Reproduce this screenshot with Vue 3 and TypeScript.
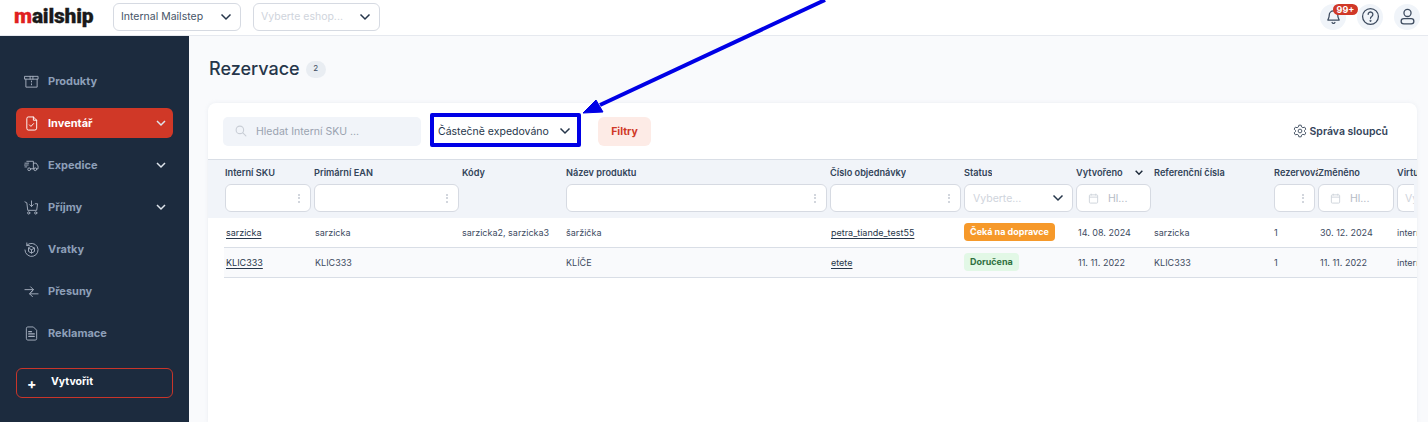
<script setup lang="ts">
const navItems = [
  { label: 'Produkty', icon: 'box', chev: false, active: false },
  { label: 'Inventář', icon: 'inv', chev: true, active: true },
  { label: 'Expedice', icon: 'truck', chev: true, active: false },
  { label: 'Příjmy', icon: 'cart', chev: true, active: false },
  { label: 'Vratky', icon: 'ret', chev: false, active: false },
  { label: 'Přesuny', icon: 'move', chev: false, active: false },
  { label: 'Reklamace', icon: 'doc', chev: false, active: false },
]
const cols = [
  { t: 'Interní SKU', f: 'dots' },
  { t: 'Primární EAN', f: 'dots' },
  { t: 'Kódy', f: '' },
  { t: 'Název produktu', f: 'dots' },
  { t: 'Číslo objednávky', f: 'dots' },
  { t: 'Status', f: 'select' },
  { t: 'Vytvořeno', f: 'date', sort: true },
  { t: 'Referenční čísla', f: '' },
  { t: 'Rezervováno', f: 'dots' },
  { t: 'Změněno', f: 'date' },
  { t: 'Virtuální', f: 'virt' },
]
const rows = [
  { sku: 'sarzicka', ean: 'sarzicka', codes: 'sarzicka2, sarzicka3', name: 'šaržička', order: 'petra_tiande_test55', status: 'Čeká na dopravce', kind: 'wait', created: '14. 08. 2024', ref: 'sarzicka', qty: '1', changed: '30. 12. 2024', virt: 'interní' },
  { sku: 'KLIC333', ean: 'KLIC333', codes: '', name: 'KLÍČE', order: 'etete', status: 'Doručena', kind: 'done', created: '11. 11. 2022', ref: 'KLIC333', qty: '1', changed: '11. 11. 2022', virt: 'interní' },
]
</script>

<template>
  <div class="app">
    <header class="top">
      <div class="logo"><span class="red">m</span>ailship</div>
      <div class="sel sel-a"><span>Internal Mailstep</span><svg class="chev" viewBox="0 0 12 8"><path d="M1.500 1.500 6 6l4.500-4.500" /></svg></div>
      <div class="sel sel-b"><span>Vyberte eshop...</span><svg class="chev" viewBox="0 0 12 8"><path d="M1.500 1.500 6 6l4.500-4.500" /></svg></div>
      <div class="top-right">
        <div class="round bell">
          <svg viewBox="0 0 24 24" width="17" height="17" fill="none" stroke="#3d4b5f" stroke-width="1.800" stroke-linecap="round" stroke-linejoin="round"><path d="M6 10a6 6 0 0 1 12 0c0 5 2 6 2 7H4c0-1 2-2 2-7Z" /><path d="M10 20.500a2.200 2.200 0 0 0 4 0" /></svg>
          <span class="badge">99+</span>
        </div>
        <div class="round help">
          <svg viewBox="0 0 24 24" width="19" height="19" fill="none" stroke="#3d4b5f" stroke-width="1.600" stroke-linecap="round"><circle cx="12" cy="12" r="10" /><path d="M9 9.300a3 3 0 1 1 4.600 2.600c-1 .6-1.600 1.200-1.600 2.400" /><circle cx="12" cy="17.500" r=".5" /></svg>
        </div>
        <div class="round user">
          <svg viewBox="0 0 24 24" width="17" height="17" fill="none" stroke="#3d4b5f" stroke-width="1.800"><circle cx="12" cy="7" r="5" /><rect x="3" y="15" width="18" height="7.500" rx="3.750" /></svg>
        </div>
      </div>
    </header>

    <div class="body">
      <aside class="side">
        <nav class="nav">
          <div v-for="n in navItems" :key="n.label" class="nav-item" :class="{ active: n.active }">
            <svg class="nav-ico" viewBox="0 0 16 16" fill="none" stroke="currentColor" stroke-width="1" stroke-linejoin="round" stroke-linecap="round">
              <template v-if="n.icon === 'box'"><path d="M1 2.500h14v3H1zM2 5.500V14h12V5.500" /><path d="M6.500 2.500v3M9.500 2.500v3M8 7.500v1M8 10.500v1" /></template>
              <template v-else-if="n.icon === 'inv'"><path d="M3 2.500A1.500 1.500 0 0 1 4.500 1H10l3.500 3.500V13a2 2 0 0 1-2 2h-7A1.500 1.500 0 0 1 3 13.500Z" /><path d="M10 1v3.500h3.500M5.800 9.500l1.600 1.600 2.800-3" /></template>
              <template v-else-if="n.icon === 'truck'"><path d="M3 3.500h7v8H7M10 5.500h3l2 3v3h-1.500M10 11.500h1M1 5.500h4M.5 7.500h4M1 9.500h2" /><circle cx="5.500" cy="12" r="1.500" /><circle cx="12" cy="12" r="1.500" /></template>
              <template v-else-if="n.icon === 'cart'"><path d="M1 2l2 1 1 8h9.500l1-7H12M8 1v5.500M6 5l2 2 2-2" /><circle cx="5" cy="13.800" r="1.200" /><circle cx="12.500" cy="13.800" r="1.200" /></template>
              <template v-else-if="n.icon === 'ret'"><path d="M3 3.500A7 7 0 1 1 1 8.500M3 1v2.800h2.800" /><path d="M8 4.800l3.200 1.700v3.600L8 11.800l-3.200-1.700V6.500ZM4.800 6.500 8 8.300l3.200-1.800M8 8.300v3.500" /></template>
              <template v-else-if="n.icon === 'move'"><path d="M1 6h9M7 3l3 3-3 3M15 10.500H6M9 7.500l-3 3 3 3" /></template>
              <template v-else><path d="M2.500 2.500A1.500 1.500 0 0 1 4 1h6l3.500 3.500v9A1.500 1.500 0 0 1 12 15H4a1.500 1.500 0 0 1-1.500-1.500Z" /><path d="M5 6h3M5 8.500h6M5 11h6" stroke-width="1.300" /></template>
            </svg>
            <span class="nav-label">{{ n.label }}</span>
            <svg v-if="n.chev" class="nav-chev" viewBox="0 0 12 8"><path d="M2 2l4 4 4-4" /></svg>
          </div>
        </nav>
        <div class="create"><span class="plus">+</span><span class="create-label">Vytvořit</span></div>
      </aside>

      <main class="main">
        <div class="title-row">
          <h1>Rezervace</h1>
          <span class="count">2</span>
        </div>
        <section class="card">
          <div class="toolbar">
            <div class="search">
              <svg viewBox="0 0 16 16" width="12" height="12" fill="none" stroke="#c9ced6" stroke-width="1.500" stroke-linecap="round"><circle cx="6.500" cy="6.500" r="5" /><path d="m10.500 10.500 4 4" /></svg>
              <span>Hledat Interní SKU ...</span>
            </div>
            <div class="state"><span>Částečně expedováno</span><svg class="chev" viewBox="0 0 12 8"><path d="M1.500 1.500 6 6l4.500-4.500" /></svg></div>
            <div class="filters">Filtry</div>
            <div class="manage">
              <svg viewBox="0 0 24 24" width="14" height="14" fill="none" stroke="#4b5869" stroke-width="1.700" stroke-linejoin="round"><path d="M10 2h4l.7 3 2.300 1.300 3-.9 2 3.400-2.300 2.200v2l2.300 2.200-2 3.400-3-.9L14.700 19 14 22h-4l-.7-3L7 17.700l-3 .9-2-3.400L4.300 13v-2L2 8.800l2-3.400 3 .9L9.300 5Z" /><circle cx="12" cy="12" r="3.200" /></svg>
              <span>Správa sloupců</span>
            </div>
          </div>

          <div class="table">
            <div class="row head">
              <div v-for="c in cols" :key="c.t" class="hcell">
                <div class="htext"><span class="htitle">{{ c.t }}</span>
                  <svg v-if="c.sort" class="sort" viewBox="0 0 12 8"><path d="M2 2l4 4 4-4" /></svg>
                </div>
                <div v-if="c.f === 'dots'" class="field dots"><i /><i /><i /></div>
                <div v-else-if="c.f === 'select'" class="field select"><span>Vyberte...</span><svg class="chev" viewBox="0 0 12 8"><path d="M1.500 1.500 6 6l4.500-4.500" /></svg></div>
                <div v-else-if="c.f === 'date'" class="field date">
                  <svg viewBox="0 0 12 12" width="11" height="11" fill="none" stroke="#cdd2da" stroke-width="1"><rect x="1.500" y="2" width="9" height="9" rx="1" /><path d="M1.500 4.500h9M3.500.8v2M8.500.8v2" /></svg>
                  <span>Hl...</span>
                </div>
                <div v-else-if="c.f === 'virt'" class="field virt"><span>Vy</span></div>
              </div>
            </div>
            <div v-for="r in rows" :key="r.sku" class="row data">
              <div class="cell"><a>{{ r.sku }}</a></div>
              <div class="cell">{{ r.ean }}</div>
              <div class="cell flush">{{ r.codes }}</div>
              <div class="cell flush">{{ r.name }}</div>
              <div class="cell"><a>{{ r.order }}</a></div>
              <div class="cell tag-cell"><span class="tag" :class="r.kind">{{ r.status }}</span></div>
              <div class="cell shift">{{ r.created }}</div>
              <div class="cell flush">{{ r.ref }}</div>
              <div class="cell flush">{{ r.qty }}</div>
              <div class="cell shift">{{ r.changed }}</div>
              <div class="cell flush">{{ r.virt }}</div>
            </div>
          </div>
        </section>
      </main>
    </div>

    <div class="mark-box" />
    <svg class="arrow" width="1428" height="422" viewBox="0 0 1428 422">
      <path d="M825 0 600 105" stroke="#0000e6" stroke-width="4" fill="none" />
      <path d="M583 113 596 100 603 112Z" fill="#0000e6" stroke="#0000e6" />
    </svg>
  </div>
</template>

<style>
html, body { margin: 0; background: #f9fafc; }
</style>

<style scoped>
.app { position: relative; width: 1428px; height: 422px; overflow: hidden; font-family: Inter, "Noto Sans", sans-serif; color: #26364a; display: flex; flex-direction: column; }
.top { height: 35px; flex: none; background: #fff; border-bottom: 1px solid #e6e9ef; display: flex; align-items: center; }
.logo { width: 113px; box-sizing: border-box; padding-left: 14px; font-family: Roboto, sans-serif; font-weight: 900; font-size: 21px; letter-spacing: -.2px; -webkit-text-stroke: .3px currentColor; color: #1a1a1a; line-height: 1; position: relative; top: -1px; }
.red { color: #e02020; }
.sel { height: 28px; box-sizing: border-box; border: 1px solid #d6dae2; border-radius: 6px; display: flex; align-items: center; justify-content: space-between; padding: 0 8px 0 7px; font-size: 10.500px; background: #fff; white-space: nowrap; position: relative; top: -1px; }
.sel-a { width: 128px; color: #465467; }
.sel-b { width: 127px; margin-left: 12px; color: #cfd4dc; }
.chev { width: 12px; height: 8px; flex: none; fill: none; stroke: #26364a; stroke-width: 1.500; }
.top-right { margin-left: auto; display: flex; position: relative; top: -1px; }
.round { width: 26px; height: 26px; border-radius: 50%; background: #f0f4f9; display: flex; align-items: center; justify-content: center; position: relative; }
.bell { margin-right: 11px; }
.help { margin-right: 11px; }
.user { margin-right: 8px; }
.badge { position: absolute; left: 13px; top: 0; height: 11px; width: 25px; border-radius: 6px; background: #d03827; color: #fff; font-size: 9px; font-weight: 700; line-height: 11px; text-align: center; }
.body { flex: 1; display: flex; min-height: 0; }
.side { width: 189px; flex: none; background: #1c2b3e; padding: 30px 16px 0; box-sizing: border-box; color: #8d9fb8; }
.nav { display: flex; flex-direction: column; gap: 12px; }
.nav-item { height: 30px; border-radius: 6px; display: flex; align-items: center; padding: 0 6px 0 8px; font-size: 11px; font-weight: 700; white-space: nowrap; }
.nav-item.active { background: #d03827; color: #fff; }
.nav-ico { width: 15px; height: 15px; flex: none; margin-right: 9px; color: #a6b0bf; }
.active .nav-ico { color: #fff; }
.nav-label { flex: 1; }
.nav-chev { width: 12px; height: 8px; fill: none; stroke: #dfe5ec; stroke-width: 1.500; }
.create { margin-top: 20px; height: 30px; box-sizing: border-box; border: 1px solid #c8352a; border-radius: 6px; color: #fff; font-size: 10.500px; font-weight: 700; display: flex; align-items: center; padding-left: 10px; }
.plus { width: 24px; font-size: 14px; }
.create-label { padding-bottom: 3px; }
.main { flex: 1; min-width: 0; background: #f9fafc; padding: 0 11px 0 19px; }
.title-row { height: 67px; display: flex; align-items: center; }
h1 { margin: 0; font-size: 18px; font-weight: 500; color: #26364a; position: relative; top: -1px; left: 1px; }
.count { margin-left: 7px; width: 20px; height: 17px; border-radius: 9px; background: #e9edf2; font-size: 8px; text-align: center; line-height: 15px; color: #3d4b5f; }
.card { background: #fff; border-radius: 8px 8px 0 0; height: 320px; overflow: hidden; box-shadow: 0 0 4px rgba(180, 190, 205, .2); }
.toolbar { height: 56px; display: flex; align-items: center; padding-left: 15px; box-sizing: border-box; }
.search { width: 198px; height: 29px; border-radius: 5px; background: #f1f4f9; display: flex; align-items: center; padding-left: 12px; box-sizing: border-box; gap: 9px; color: #9aa3b0; font-size: 10.500px; }
.state { margin-left: 9px; width: 151px; height: 33px; box-sizing: border-box; display: flex; align-items: center; justify-content: space-between; padding: 0 10px 0 8px; font-size: 10.500px; color: #26364a; white-space: nowrap; }
.filters { margin-left: 17px; width: 53px; height: 29px; border-radius: 6px; background: #fdebe6; color: #d03827; font-size: 10.500px; font-weight: 700; display: flex; align-items: center; justify-content: center; }
.manage { margin-left: auto; margin-right: 29px; display: flex; align-items: center; gap: 3px; font-size: 10.500px; font-weight: 600; color: #33445a; }
.table { border-top: 1px solid #d9dee6; }
.row { display: grid; grid-template-columns: 89px 148px 104px 264px 134px 112px 78px 120px 44px 79px 1fr; padding-left: 17px; }
.head { background: #f1f4f9; height: 58px; box-sizing: border-box; }
.hcell { min-width: 0; padding-right: 3px; }
.htext { height: 24px; box-sizing: border-box; padding-top: 1px; margin-right: -3px; display: flex; align-items: center; justify-content: space-between; font-size: 9.200px; font-weight: 600; color: #33445a; white-space: nowrap; overflow: hidden; }
.htitle { overflow: hidden; }
.sort { width: 10px; height: 7px; margin-right: 10px; fill: none; stroke: #1d2a3a; stroke-width: 1.800; flex: none; }
.field { height: 28px; box-sizing: border-box; border: 1px solid #d6dae2; border-radius: 6px; background: #fff; font-size: 10.500px; color: #cfd4dc; display: flex; align-items: center; white-space: nowrap; overflow: hidden; }
.dots { flex-direction: column; align-items: flex-end; justify-content: center; gap: 1.500px; padding-right: 10px; }
.dots i { width: 2px; height: 2px; border-radius: 50%; background: #c3c9d2; display: block; }
.select { justify-content: space-between; padding: 0 8px; }
.date { padding-left: 11px; gap: 9px; color: #b6bcc6; }
.virt { padding-left: 7px; border-right: 0; border-radius: 6px 0 0 6px; }
.data { height: 30px; box-sizing: border-box; border-bottom: 1px solid #d9dee6; margin-left: 16px; padding-left: 1px; background: #fff; }
.data:last-child { background: #f9fafc; }
.cell { font-size: 9px; color: #3d4b5f; display: flex; align-items: center; white-space: nowrap; padding-left: 1px; min-width: 0; overflow: hidden; }
.cell a { color: #26364a; text-decoration: underline; text-underline-offset: 1.500px; }
.flush { padding-left: 0; }
.shift { padding-left: 2px; }
.tag-cell { padding-left: 0; margin-top: -1px; }
.tag { height: 18px; line-height: 17px; border-radius: 4px; padding: 0 6px; font-size: 9px; font-weight: 700; }
.wait { background: #f6992a; color: #fff; }
.done { background: #e2f8e6; color: #2f7040; }
.mark-box { position: absolute; left: 430px; top: 113px; width: 151px; height: 34px; box-sizing: border-box; border: 4px solid #0000e6; border-radius: 2px; }
.arrow { position: absolute; left: 0; top: 0; pointer-events: none; }
</style>
